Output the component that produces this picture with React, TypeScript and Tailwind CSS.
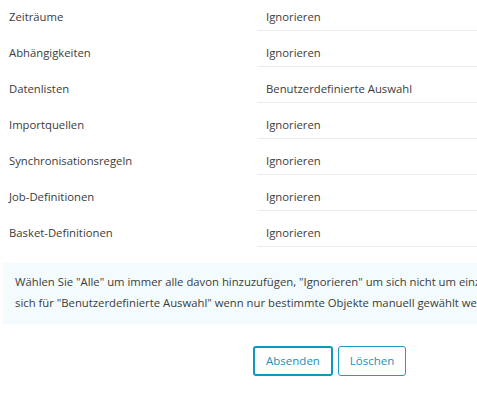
import React from 'react';

const rows = [
  { label: 'Zeiträume', value: 'Ignorieren' },
  { label: 'Abhängigkeiten', value: 'Ignorieren' },
  { label: 'Datenlisten', value: 'Benutzerdefinierte Auswahl' },
  { label: 'Importquellen', value: 'Ignorieren' },
  { label: 'Synchronisationsregeln', value: 'Ignorieren' },
  { label: 'Job-Definitionen', value: 'Ignorieren' },
  { label: 'Basket-Definitionen', value: 'Ignorieren' },
];

const App = () => {
  return (
    <div
      className="w-[477px] h-[402px] overflow-hidden bg-white text-[#3b3b3b] text-[11.3px]"
      style={{ fontFamily: '"Open Sans", "Noto Sans", sans-serif' }}
    >
      {/* Settings rows */}
      <div className="-mt-[5px]">
        {rows.map(row => (
          <div key={row.label} className="flex h-9">
            <div className="w-[258px] shrink-0 pl-[9px] pt-[13px] leading-[18px]">{row.label}</div>
            <div className="flex-1 border-b border-[#ebebeb] pl-[8px] pt-[13px] leading-[18px]">
              {row.value}
            </div>
          </div>
        ))}
      </div>

      {/* Info box */}
      <div className="mt-[16px] ml-[3px] w-[700px] bg-[#f3fbfd] pt-[8px] pb-[11px] pl-[12px] leading-[21px] whitespace-nowrap">
        Wählen Sie "Alle" um immer alle davon hinzuzufügen, "Ignorieren" um sich nicht um einzelne zu kümmern, oder entscheiden Sie
        <br />
        sich für "Benutzerdefinierte Auswahl" wenn nur bestimmte Objekte manuell gewählt werden sollen.
      </div>

      {/* Buttons */}
      <div className="flex gap-[5px] mt-[22px] pl-[253px]">
        <button className="w-[80px] h-[30px] border-2 border-[#0f97bd] rounded-[3px] text-[#1f8fb6] text-[11.5px]">
          Absenden
        </button>
        <button className="w-[68px] h-[30px] border border-[#1f9cc2] rounded-[3px] text-[#1f8fb6] text-[11.5px]">
          Löschen
        </button>
      </div>
    </div>
  );
};

export default App;
